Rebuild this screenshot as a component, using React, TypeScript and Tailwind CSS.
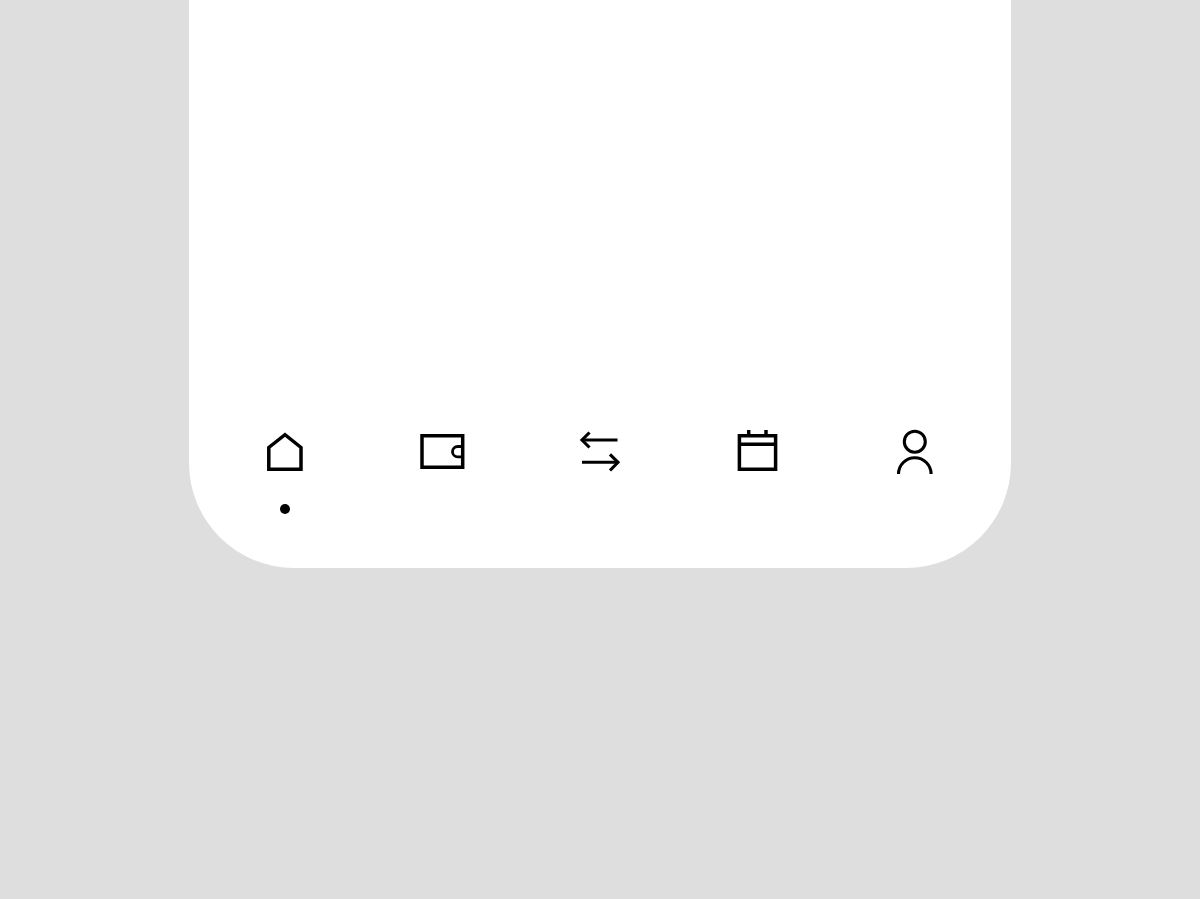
import type { ReactNode } from "react";

// 하단 탭 아이콘 공통 스타일
function Icon({ children, stroke = 3.5 }: { children: ReactNode; stroke?: number }) {
  return (
    <svg
      width="48"
      height="48"
      viewBox="0 0 48 48"
      fill="none"
      stroke="#000"
      strokeWidth={stroke}
      className="block"
    >
      {children}
    </svg>
  );
}

const HomeIcon = () => (
  <Icon>
    <path d="M7.800 41.300V19.500L24 6.700L40 19.500V41.300Z" />
  </Icon>
);

const WalletIcon = () => (
  <Icon>
    <path d="M3 7.700H43.700V39.300H3Z" />
    <path d="M43.700 18.500H38.700a5.200 5.200 0 0 0 0 10.400h5" strokeWidth="2.800" />
  </Icon>
);

const TransferIcon = () => (
  <Icon stroke={3.1}>
    <path d="M41.500 12H6.500" />
    <path d="M13.500 4.500L6 12L13.500 19.500" />
    <path d="M6 34.300H42" />
    <path d="M34 26.300L42 34.300L34 42.500" />
  </Icon>
);

const CalendarIcon = () => (
  <Icon>
    <path d="M5.400 7.700H41.600V41.300H5.400Z" />
    <path d="M5.400 16.300H41.600" />
    <path d="M14.700 2V7.500M32 2V7.500" />
  </Icon>
);

const UserIcon = () => (
  <Icon stroke={3.1}>
    <circle cx="23.800" cy="13.700" r="10.500" />
    <path d="M7.500 46a16.300 16.300 0 0 1 32.600 0" />
  </Icon>
);

const tabs = [
  { id: "home", icon: <HomeIcon />, active: true },
  { id: "wallet", icon: <WalletIcon />, active: false },
  { id: "transfer", icon: <TransferIcon />, active: false },
  { id: "calendar", icon: <CalendarIcon />, active: false },
  { id: "user", icon: <UserIcon />, active: false },
];

export default function App() {
  return (
    <div className="h-[899px] bg-[#dedede] font-['Liberation_Sans',sans-serif]">
      <div className="mx-auto flex h-[568px] w-[822px] flex-col justify-end rounded-b-[105px] bg-white px-[17.25px] pb-[54.5px]">
        {/* 하단 탭바 */}
        <nav className="grid grid-cols-5">
          {tabs.map((tab) => (
            <button key={tab.id} className="flex flex-col items-center">
              {tab.icon}
              {tab.active && (
                <span className="mt-[28px] h-[9.5px] w-[9.5px] rounded-full bg-black" />
              )}
            </button>
          ))}
        </nav>
      </div>
    </div>
  );
}
